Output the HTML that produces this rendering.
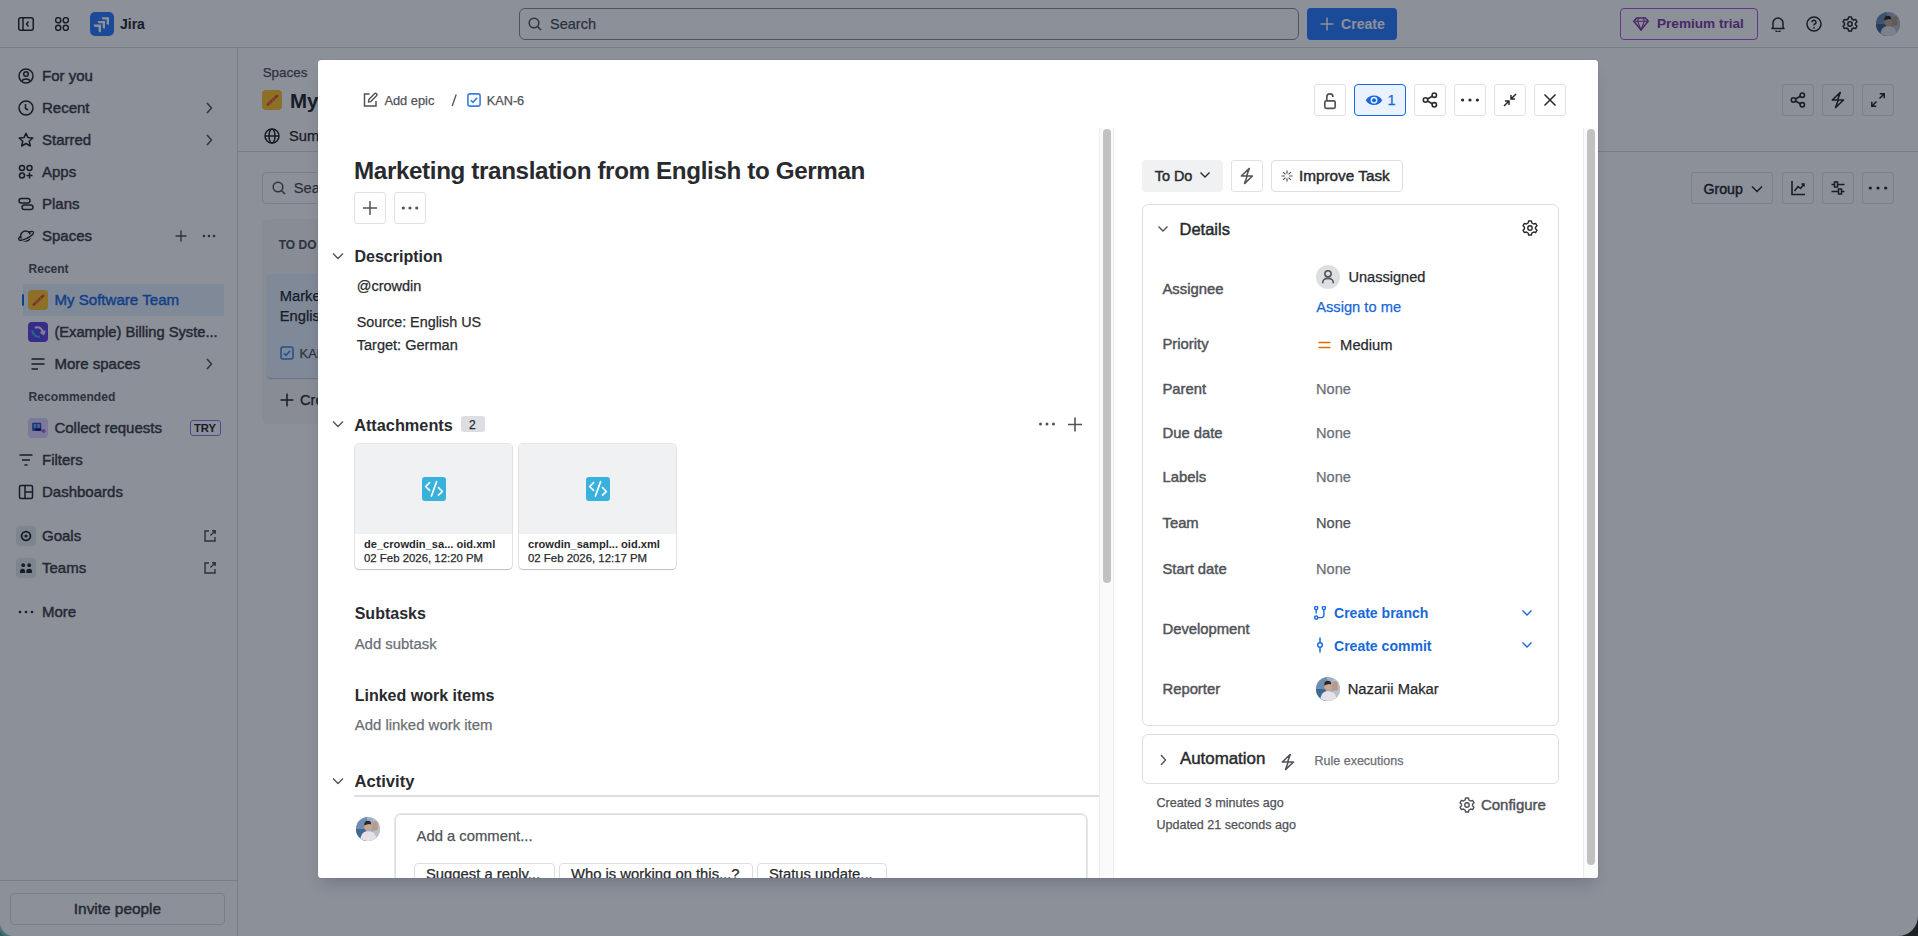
<!DOCTYPE html><html><head><meta charset="utf-8"><style>
*{margin:0;padding:0}
html,body{width:1918px;height:936px;overflow:hidden;background:#fff}
body{font-family:"Liberation Sans",sans-serif;position:relative}
.t{position:absolute;line-height:1;white-space:nowrap;-webkit-text-stroke:0.25px currentColor}
.t.b{-webkit-text-stroke:0}
.t.m{-webkit-text-stroke:0.45px currentColor}
.r{position:absolute;display:block}
#page{position:absolute;left:0;top:0;width:1918px;height:936px;overflow:hidden}
#blanket{position:absolute;left:0;top:0;width:1918px;height:936px;background:rgba(5,12,31,0.46)}
#modal{position:absolute;left:318px;top:60px;width:1280px;height:818px;background:#fff;border-radius:3px;box-shadow:0 10px 14px -4px rgba(9,30,66,.18),0 0 1px rgba(9,30,66,.31)}
#mc{position:absolute;left:0;top:0;width:1918px;height:936px;overflow:hidden;clip-path:inset(60px 320px 58px 318px round 3px)}
</style></head><body><div id="page">
<div class="r" style="left:0px;top:47px;width:1918px;height:1px;background:#DDDEE1"></div>
<svg class="r" style="left:18px;top:17px;" width="16" height="14" viewBox="0 0 16 14" fill="none"><rect x="0.75" y="0.75" width="14.5" height="12.5" rx="2" stroke="#292A2E" stroke-width="1.5"/><line x1="5" y1="1" x2="5" y2="13" stroke="#292A2E" stroke-width="1.5"/><path d="M10.5 4.5 L8.5 7 L10.5 9.5" stroke="#292A2E" stroke-width="1.5"/></svg>
<svg class="r" style="left:55px;top:17px;" width="14" height="14" viewBox="0 0 14 14" fill="none"><circle cx="3.2" cy="3.2" r="2.6" stroke="#292A2E" stroke-width="1.5"/><circle cx="3.2" cy="10.8" r="2.6" stroke="#292A2E" stroke-width="1.5"/><circle cx="10.8" cy="3.2" r="2.6" stroke="#292A2E" stroke-width="1.5"/><circle cx="10.8" cy="10.8" r="2.6" stroke="#292A2E" stroke-width="1.5"/></svg>
<div class="r" style="left:90px;top:12px;width:24px;height:24px;background:#2F80FF;border-radius:5px"></div>
<svg class="r" style="left:90px;top:12px;" width="24" height="24" viewBox="0 0 24 24" fill="none"><path d="M11.5 5.2 L19 5.2 L19 13.0 L16.6 12.0 L16.6 7.6 L12.6 7.6 Z" fill="#fff"/><path d="M7.5 8.9 L15 8.9 L15 16.7 L12.600000000000001 15.7 L12.600000000000001 11.3 L8.6 11.3 Z" fill="#fff"/><path d="M3.5 12.600000000000001 L11 12.600000000000001 L11 20.4 L8.600000000000001 19.4 L8.600000000000001 15.0 L4.6 15.0 Z" fill="#fff"/></svg>
<div class="t b" style="left:120px;top:17.45px;font-size:14px;font-weight:700;color:#292A2E;">Jira</div>
<div class="r" style="left:519px;top:8px;width:780px;height:32px;border:1px solid #8C8F97;border-radius:6px;box-sizing:border-box"></div>
<svg class="r" style="left:528px;top:17px;" width="14" height="14" viewBox="0 0 14 14" fill="none"><circle cx="6" cy="6" r="4.8" stroke="#505258" stroke-width="1.5"/><line x1="9.5" y1="9.5" x2="13" y2="13" stroke="#505258" stroke-width="1.5"/></svg>
<div class="t" style="left:550px;top:17.33px;font-size:14.5px;font-weight:400;color:#505258;">Search</div>
<div class="r" style="left:1307px;top:8px;width:90px;height:32px;background:#2F80FF;border-radius:4px"></div>
<svg class="r" style="left:1320px;top:17px;" width="14" height="14" viewBox="0 0 14 14" fill="none"><path d="M7 0.5 V13.5 M0.5 7 H13.5" stroke="#fff" stroke-width="1.5"/></svg>
<div class="t b" style="left:1341px;top:16.86px;font-size:14.1px;font-weight:700;color:#FFFFFF;">Create</div>
<div class="r" style="left:1620px;top:8px;width:138px;height:32px;border:1px solid #AF59E1;border-radius:4px;box-sizing:border-box"></div>
<svg class="r" style="left:1633px;top:17px;" width="16" height="14" viewBox="0 0 16 14" fill="none"><path d="M3.6 0.9 H12.4 L15.2 4.3 L8 13 L0.8 4.3 Z" stroke="#803FA5" stroke-width="1.5" stroke-linejoin="round"/><path d="M0.8 4.3 H15.2 M5.6 0.9 L4.6 4.3 L8 13 L11.4 4.3 L10.4 0.9" stroke="#803FA5" stroke-width="1.1"/></svg>
<div class="t b" style="left:1657px;top:17.09px;font-size:13.6px;font-weight:700;color:#803FA5;">Premium trial</div>
<svg class="r" style="left:1770px;top:16px;" width="16" height="16" viewBox="0 0 16 16" fill="none"><path d="M3 11.5 V7 a5 5 0 0 1 10 0 V11.5 L14 12.5 H2 Z" stroke="#292A2E" stroke-width="1.5" stroke-linejoin="round"/><path d="M6 14.5 a2 1.6 0 0 0 4 0" stroke="#292A2E" stroke-width="1.5"/></svg>
<svg class="r" style="left:1806px;top:16px;" width="16" height="16" viewBox="0 0 16 16" fill="none"><circle cx="8" cy="8" r="7" stroke="#292A2E" stroke-width="1.5"/><path d="M6 6.2 a2 2 0 1 1 2.8 1.8 c-.6.3-.8.7-.8 1.4" stroke="#292A2E" stroke-width="1.5"/><circle cx="8" cy="11.8" r="0.9" fill="#292A2E"/></svg>
<svg class="r" style="left:1842px;top:16px;" width="16" height="16" viewBox="0 0 16 16" fill="none"><path d="M6.6 1 H9.4 L9.9 3 L11.6 4 L13.6 3.4 L15 5.8 L13.5 7.2 V8.8 L15 10.2 L13.6 12.6 L11.6 12 L9.9 13 L9.4 15 H6.6 L6.1 13 L4.4 12 L2.4 12.6 L1 10.2 L2.5 8.8 V7.2 L1 5.8 L2.4 3.4 L4.4 4 L6.1 3 Z" stroke="#292A2E" stroke-width="1.5" stroke-linejoin="round"/><circle cx="8" cy="8" r="2.2" stroke="#292A2E" stroke-width="1.5"/></svg>
<div class="r" style="left:1876px;top:12px;width:24px;height:24px;border-radius:50%;overflow:hidden"><svg width="24" height="24" viewBox="0 0 24 24" style="position:absolute;left:0;top:0"><rect width="24" height="24" fill="#9fb0c4"/><rect x="0" y="0" width="11" height="24" fill="#6f8fb2"/><rect x="0" y="12" width="10" height="12" fill="#3f6a8f"/><rect x="17" y="0" width="7" height="24" fill="#b9bfcb"/><path d="M15.5 14 L17 5 Q19 3 21.5 5.5 L22 13 Z" fill="#b89a86"/><ellipse cx="11.8" cy="9.6" rx="3.6" ry="4.6" fill="#c9a690"/><path d="M8.2 8.5 Q8 3.6 12 3.8 Q15.6 3.8 15.2 7.6 Q13 6 8.2 8.5 Z" fill="#2b2826"/><path d="M4 24 Q5 15 10 14.2 L13.5 14.2 Q20 14.5 21 24 Z" fill="#e6e1e8"/></svg></div>
<div class="r" style="left:237px;top:48px;width:1px;height:888px;background:#DDDEE1"></div>
<svg class="r" style="left:18px;top:68px;" width="16" height="16" viewBox="0 0 16 16" fill="none"><circle cx="8" cy="8" r="7" stroke="#292A2E" stroke-width="1.5"/><circle cx="8" cy="6" r="2.3" stroke="#292A2E" stroke-width="1.5"/><path d="M3.8 12.8 a4.5 3 0 0 1 8.4 0" stroke="#292A2E" stroke-width="1.5"/></svg>
<div class="t m" style="left:42px;top:68.10px;font-size:15px;font-weight:400;color:#3F4147;">For you</div>
<svg class="r" style="left:18px;top:100px;" width="16" height="16" viewBox="0 0 16 16" fill="none"><circle cx="8" cy="8" r="7" stroke="#292A2E" stroke-width="1.5"/><path d="M7.5 4 V8.5 L10 10" stroke="#292A2E" stroke-width="1.5"/></svg>
<div class="t m" style="left:42px;top:100.10px;font-size:15px;font-weight:400;color:#3F4147;">Recent</div>
<svg class="r" style="left:205px;top:102px;" width="8" height="12" viewBox="0 0 8 12" fill="none"><path d="M2 1 L6.5 6 L2 11" stroke="#505258" stroke-width="1.5"/></svg>
<svg class="r" style="left:18px;top:132px;" width="16" height="16" viewBox="0 0 16 16" fill="none"><path d="M8 1.2 L10 5.6 L14.8 6 L11.2 9.2 L12.3 14 L8 11.5 L3.7 14 L4.8 9.2 L1.2 6 L6 5.6 Z" stroke="#292A2E" stroke-width="1.5" stroke-linejoin="round"/></svg>
<div class="t m" style="left:42px;top:132.10px;font-size:15px;font-weight:400;color:#3F4147;">Starred</div>
<svg class="r" style="left:205px;top:134px;" width="8" height="12" viewBox="0 0 8 12" fill="none"><path d="M2 1 L6.5 6 L2 11" stroke="#505258" stroke-width="1.5"/></svg>
<svg class="r" style="left:18px;top:164px;" width="16" height="16" viewBox="0 0 16 16" fill="none"><circle cx="4" cy="4" r="2.5" stroke="#292A2E" stroke-width="1.5"/><circle cx="11.5" cy="4" r="2.5" stroke="#292A2E" stroke-width="1.5"/><circle cx="4" cy="11.5" r="2.5" stroke="#292A2E" stroke-width="1.5"/><path d="M11.5 8.5 V14.5 M8.5 11.5 H14.5" stroke="#292A2E" stroke-width="1.5"/></svg>
<div class="t m" style="left:42px;top:164.10px;font-size:15px;font-weight:400;color:#3F4147;">Apps</div>
<svg class="r" style="left:18px;top:196px;" width="16" height="16" viewBox="0 0 16 16" fill="none"><rect x="1" y="2.5" width="11" height="4.5" rx="2.25" stroke="#292A2E" stroke-width="1.5"/><rect x="4" y="9" width="11" height="4.5" rx="2.25" stroke="#292A2E" stroke-width="1.5"/></svg>
<div class="t m" style="left:42px;top:196.10px;font-size:15px;font-weight:400;color:#3F4147;">Plans</div>
<svg class="r" style="left:18px;top:228px;" width="16" height="16" viewBox="0 0 16 16" fill="none"><ellipse cx="8.1" cy="7.9" rx="8.2" ry="2.5" transform="rotate(-27 8.1 7.9)" stroke="#292A2E" stroke-width="1.5"/><circle cx="7.6" cy="8.1" r="5" fill="#fff" stroke="#292A2E" stroke-width="1.5"/><path d="M15.41 4.18 L15.49 4.57 L15.40 5.05 L15.13 5.59 L14.68 6.20 L14.07 6.84 L13.31 7.51 L12.43 8.19 L11.44 8.87 L10.36 9.52 L9.23 10.13 L8.08 10.68 L6.92 11.17 L5.79 11.57 L4.72 11.89 L3.74 12.11 L2.86 12.22 L2.11 12.23 L1.50 12.13 L1.06 11.93 L0.79 11.62" stroke="#fff" stroke-width="3.2"/><path d="M15.41 4.18 L15.49 4.57 L15.40 5.05 L15.13 5.59 L14.68 6.20 L14.07 6.84 L13.31 7.51 L12.43 8.19 L11.44 8.87 L10.36 9.52 L9.23 10.13 L8.08 10.68 L6.92 11.17 L5.79 11.57 L4.72 11.89 L3.74 12.11 L2.86 12.22 L2.11 12.23 L1.50 12.13 L1.06 11.93 L0.79 11.62" stroke="#292A2E" stroke-width="1.5"/></svg>
<div class="t m" style="left:42px;top:228.10px;font-size:15px;font-weight:400;color:#3F4147;">Spaces</div>
<svg class="r" style="left:175px;top:230px;" width="12" height="12" viewBox="0 0 12 12" fill="none"><path d="M6 0.5 V11.5 M0.5 6 H11.5" stroke="#505258" stroke-width="1.4"/></svg>
<svg class="r" style="left:202px;top:234px;" width="14" height="4" viewBox="0 0 14 4" fill="none"><circle cx="2" cy="2" r="1.3" fill="#505258"/><circle cx="7" cy="2" r="1.3" fill="#505258"/><circle cx="12" cy="2" r="1.3" fill="#505258"/></svg>
<div class="t b" style="left:28.6px;top:262.84px;font-size:12px;font-weight:700;color:#505258;">Recent</div>
<div class="r" style="left:23px;top:284px;width:201px;height:32px;background:#E9F2FE;border-radius:1px"></div>
<div class="r" style="left:22px;top:294px;width:2.2px;height:12px;background:#1C6CE0;border-radius:1px"></div>
<div class="r" style="left:28px;top:290px;width:20px;height:20px;background:#FFC530;border-radius:4px;overflow:hidden"></div>
<svg class="r" style="left:28px;top:290px;" width="20" height="20" viewBox="0 0 20 20" fill="none"><path d="M5.8 14.6 L15.2 5.8" stroke="#E2502A" stroke-width="2.6" stroke-linecap="round"/><path d="M7.5 13 L13.5 7.4" stroke="#FFC2A0" stroke-width="1" stroke-dasharray="1.6 1.4"/></svg>
<div class="t m" style="left:54.4px;top:292.42px;font-size:15.1px;font-weight:400;color:#1C6CE0;">My Software Team</div>
<div class="r" style="left:28px;top:322px;width:20px;height:20px;background:#6446E6;border-radius:4px"></div>
<svg class="r" style="left:28px;top:322px;" width="20" height="20" viewBox="0 0 20 20" fill="none"><path d="M6.8 5.8 Q12.6 3.6 15.2 10.4" stroke="#E8ECF8" stroke-width="2"/><path d="M12.6 10 L15.6 12.2 L16.9 8.6" stroke="#E8ECF8" stroke-width="1.8" stroke-linejoin="round"/><path d="M4.3 8.4 Q5.4 15 12 15" stroke="#2FB7E8" stroke-width="2.2"/></svg>
<div class="t m" style="left:54.4px;top:324.76px;font-size:14.7px;font-weight:400;color:#3F4147;">(Example) Billing Syste...</div>
<svg class="r" style="left:31px;top:358px;" width="14" height="12" viewBox="0 0 14 12" fill="none"><path d="M0.5 1 H13.5 M0.5 6 H13.5 M0.5 11 H7" stroke="#292A2E" stroke-width="1.5"/></svg>
<div class="t m" style="left:54.4px;top:356.40px;font-size:15px;font-weight:400;color:#3F4147;">More spaces</div>
<svg class="r" style="left:205px;top:358px;" width="8" height="12" viewBox="0 0 8 12" fill="none"><path d="M2 1 L6.5 6 L2 11" stroke="#505258" stroke-width="1.5"/></svg>
<div class="t b" style="left:28.6px;top:390.56px;font-size:12.1px;font-weight:700;color:#505258;">Recommended</div>
<div class="r" style="left:28px;top:418px;width:20px;height:20px;background:#E3D4FF;border-radius:4px"></div>
<svg class="r" style="left:28px;top:418px;" width="20" height="20" viewBox="0 0 20 20" fill="none"><rect x="4.2" y="4.7" width="9" height="8.2" rx="0.8" fill="#2456C8"/><rect x="5.8" y="6" width="2.4" height="4" fill="#8FA8E8"/><rect x="9.2" y="6" width="2.6" height="4" fill="#8FA8E8"/><rect x="7.5" y="10.4" width="5.7" height="2.5" fill="#0B1E7A"/><path d="M15.5 11 V15 M13.5 13 H17.5" stroke="#B14FE0" stroke-width="1.6"/></svg>
<div class="t m" style="left:54.4px;top:420.20px;font-size:15px;font-weight:400;color:#3F4147;">Collect requests</div>
<div class="r" style="left:190px;top:420px;width:31px;height:16px;border:1px solid #8F7EE7;border-radius:3px;box-sizing:border-box"></div>
<div class="t b" style="left:194px;top:423.32px;font-size:11.2px;font-weight:700;color:#292A2E;">TRY</div>
<svg class="r" style="left:18px;top:452px;" width="16" height="16" viewBox="0 0 16 16" fill="none"><path d="M1.5 3 H14.5 M4 8 H12 M6.5 13 H9.5" stroke="#292A2E" stroke-width="1.5"/></svg>
<div class="t m" style="left:42px;top:452.10px;font-size:15px;font-weight:400;color:#3F4147;">Filters</div>
<svg class="r" style="left:18px;top:484px;" width="16" height="16" viewBox="0 0 16 16" fill="none"><rect x="1.5" y="1.5" width="13" height="13" rx="1.5" stroke="#292A2E" stroke-width="1.5"/><path d="M7 1.5 V14.5 M7 8 H14.5" stroke="#292A2E" stroke-width="1.5"/></svg>
<div class="t m" style="left:42px;top:484.10px;font-size:15px;font-weight:400;color:#3F4147;">Dashboards</div>
<div class="r" style="left:16px;top:526px;width:20px;height:20px;background:#E8EAED;border-radius:4px"></div>
<svg class="r" style="left:18px;top:528px;" width="16" height="16" viewBox="0 0 16 16" fill="none"><circle cx="8" cy="8" r="4.4" stroke="#292A2E" stroke-width="1.9"/><circle cx="8" cy="8" r="1.6" fill="#292A2E"/></svg>
<div class="t m" style="left:42px;top:528.10px;font-size:15px;font-weight:400;color:#3F4147;">Goals</div>
<svg class="r" style="left:203px;top:529px;" width="14" height="14" viewBox="0 0 14 14" fill="none"><path d="M6 2 H2 V12 H12 V8" stroke="#505258" stroke-width="1.4"/><path d="M7.5 6.5 L12 2 M9 1.8 H12.2 V5" stroke="#505258" stroke-width="1.4"/></svg>
<div class="r" style="left:16px;top:558px;width:20px;height:20px;background:#E8EAED;border-radius:4px"></div>
<svg class="r" style="left:18px;top:560px;" width="16" height="16" viewBox="0 0 16 16" fill="none"><circle cx="5.2" cy="5.2" r="1.9" fill="#292A2E"/><circle cx="11.2" cy="5.2" r="1.9" fill="#292A2E"/><path d="M2 13 V11 Q2 8.8 4.6 8.8 Q7.1 8.8 7.1 11 V13 Z M8.4 13 V11 Q8.4 8.8 11.1 8.8 Q13.9 8.8 13.9 11 V13 Z" fill="#292A2E"/></svg>
<div class="t m" style="left:42px;top:560.10px;font-size:15px;font-weight:400;color:#3F4147;">Teams</div>
<svg class="r" style="left:203px;top:561px;" width="14" height="14" viewBox="0 0 14 14" fill="none"><path d="M6 2 H2 V12 H12 V8" stroke="#505258" stroke-width="1.4"/><path d="M7.5 6.5 L12 2 M9 1.8 H12.2 V5" stroke="#505258" stroke-width="1.4"/></svg>
<svg class="r" style="left:18px;top:610px;" width="16" height="4" viewBox="0 0 16 4" fill="none"><circle cx="2" cy="2" r="1.3" fill="#292A2E"/><circle cx="8" cy="2" r="1.3" fill="#292A2E"/><circle cx="14" cy="2" r="1.3" fill="#292A2E"/></svg>
<div class="t m" style="left:42px;top:604.10px;font-size:15px;font-weight:400;color:#3F4147;">More</div>
<div class="r" style="left:0px;top:880px;width:237px;height:1px;background:#DDDEE1"></div>
<div class="r" style="left:10px;top:893px;width:215px;height:32px;border:1px solid #DDDEE1;border-radius:4px;box-sizing:border-box"></div>
<div class="t m" style="left:73.8px;top:901.36px;font-size:15.4px;font-weight:400;color:#3F4147;">Invite people</div>
<div class="t" style="left:262.7px;top:66.06px;font-size:13.4px;font-weight:400;color:#505258;">Spaces</div>
<div class="r" style="left:262px;top:90px;width:20px;height:20px;background:#FFC530;border-radius:4px;overflow:hidden"></div>
<svg class="r" style="left:262px;top:90px;" width="20" height="20" viewBox="0 0 20 20" fill="none"><path d="M5.8 14.6 L15.2 5.8" stroke="#E2502A" stroke-width="2.6" stroke-linecap="round"/><path d="M7.5 13 L13.5 7.4" stroke="#FFC2A0" stroke-width="1" stroke-dasharray="1.6 1.4"/></svg>
<div class="t b" style="left:290px;top:91.35px;font-size:20.5px;font-weight:700;color:#292A2E;">My Software Team</div>
<svg class="r" style="left:264px;top:128px;" width="16" height="16" viewBox="0 0 16 16" fill="none"><circle cx="8" cy="8" r="7" stroke="#292A2E" stroke-width="1.5"/><ellipse cx="8" cy="8" rx="3" ry="7" stroke="#292A2E" stroke-width="1.5"/><path d="M1 8 H15" stroke="#292A2E" stroke-width="1.5"/></svg>
<div class="t" style="left:289px;top:128.56px;font-size:14.7px;font-weight:400;color:#292A2E;">Summary</div>
<div class="r" style="left:238px;top:151px;width:1680px;height:1px;background:#DDDEE1"></div>
<div class="r" style="left:262px;top:172px;width:200px;height:32px;border:1px solid #DDDEE1;border-radius:4px;box-sizing:border-box"></div>
<svg class="r" style="left:272px;top:181px;" width="14" height="14" viewBox="0 0 14 14" fill="none"><circle cx="6" cy="6" r="4.8" stroke="#505258" stroke-width="1.5"/><line x1="9.5" y1="9.5" x2="13" y2="13" stroke="#505258" stroke-width="1.5"/></svg>
<div class="t" style="left:293.7px;top:181.16px;font-size:14.7px;font-weight:400;color:#505258;">Search board</div>
<div class="r" style="left:262px;top:219px;width:272px;height:205px;background:#F7F8F9;border-radius:6px"></div>
<div class="t b" style="left:278.7px;top:239.14px;font-size:12px;font-weight:700;color:#505258;">TO DO</div>
<div class="r" style="left:267px;top:274px;width:260px;height:104px;background:#E9F2FE;border-radius:4px;box-shadow:0 1px 1px rgba(9,30,66,.25)"></div>
<div class="t" style="left:279.8px;top:289.16px;font-size:14.7px;font-weight:400;color:#292A2E;">Marketing translation from</div>
<div class="t" style="left:279.8px;top:309.16px;font-size:14.7px;font-weight:400;color:#292A2E;">English to German</div>
<svg class="r" style="left:280px;top:346px;" width="14" height="14" viewBox="0 0 14 14" fill="none"><rect x="1" y="1" width="12" height="12" rx="2" stroke="#4688EC" stroke-width="1.6"/><path d="M3.8 7.2 L6 9.4 L10.2 4.8" stroke="#4688EC" stroke-width="1.6"/></svg>
<div class="t" style="left:299.5px;top:346.60px;font-size:13px;font-weight:400;color:#505258;">KAN-6</div>
<svg class="r" style="left:280px;top:393px;" width="14" height="14" viewBox="0 0 14 14" fill="none"><path d="M7 0.5 V13.5 M0.5 7 H13.5" stroke="#292A2E" stroke-width="1.5"/></svg>
<div class="t" style="left:300px;top:392.66px;font-size:14.7px;font-weight:400;color:#292A2E;">Create</div>
<div class="r" style="left:1782px;top:84px;width:32px;height:32px;border:1px solid #E0E1E3;background:transparent;border-radius:3px;box-sizing:border-box"></div>
<svg class="r" style="left:1782px;top:84px;" width="32" height="32" viewBox="0 0 32 32" fill="none"><circle cx="20.3" cy="11.2" r="2.2" stroke="#292A2E" stroke-width="1.6"/><circle cx="11.5" cy="16" r="2.2" stroke="#292A2E" stroke-width="1.6"/><circle cx="20.3" cy="20.8" r="2.2" stroke="#292A2E" stroke-width="1.6"/><path d="M13.5 15 L18.3 12.3 M13.5 17 L18.3 19.7" stroke="#292A2E" stroke-width="1.6"/></svg>
<div class="r" style="left:1822px;top:84px;width:32px;height:32px;border:1px solid #E0E1E3;background:transparent;border-radius:3px;box-sizing:border-box"></div>
<svg class="r" style="left:1822px;top:84px;" width="32" height="32" viewBox="0 0 32 32" fill="none"><path d="M18.3 8.4 L10.3 16 H16.2 L13.5 23.6 L21.5 16 H15.6 Z" stroke="#292A2E" stroke-width="1.5" stroke-linejoin="round"/></svg>
<div class="r" style="left:1862px;top:84px;width:32px;height:32px;border:1px solid #E0E1E3;background:transparent;border-radius:3px;box-sizing:border-box"></div>
<svg class="r" style="left:1862px;top:84px;" width="32" height="32" viewBox="0 0 32 32" fill="none"><path d="M17.5 14.5 L22 10 M17.8 9.8 H22.2 V14.2 M14.5 17.5 L10 22 M9.8 17.8 V22.2 H14.2" stroke="#292A2E" stroke-width="1.5"/></svg>
<div class="r" style="left:1691px;top:172px;width:82px;height:32px;border:1px solid #E0E1E3;background:transparent;border-radius:3px;box-sizing:border-box"></div>
<svg class="r" style="left:1691px;top:172px;" width="82" height="32" viewBox="0 0 82 32" fill="none"><path d="M61 14.5 L66 19.5 L71 14.5" stroke="#292A2E" stroke-width="1.5"/></svg>
<div class="t m" style="left:1703.4px;top:182.08px;font-size:14.2px;font-weight:400;color:#292A2E;">Group</div>
<div class="r" style="left:1782px;top:172px;width:32px;height:32px;border:1px solid #E0E1E3;background:transparent;border-radius:3px;box-sizing:border-box"></div>
<svg class="r" style="left:1782px;top:172px;" width="32" height="32" viewBox="0 0 32 32" fill="none"><path d="M10 9 V22.5 H23" stroke="#292A2E" stroke-width="1.6"/><path d="M12.5 19 L16 14.5 L18.5 16.5 L22 12 M19.5 12 H22 V14.5" stroke="#292A2E" stroke-width="1.5"/></svg>
<div class="r" style="left:1822px;top:172px;width:32px;height:32px;border:1px solid #E0E1E3;background:transparent;border-radius:3px;box-sizing:border-box"></div>
<svg class="r" style="left:1822px;top:172px;" width="32" height="32" viewBox="0 0 32 32" fill="none"><path d="M9.5 12.5 H22.5 M9.5 19.5 H22.5" stroke="#292A2E" stroke-width="1.6"/><rect x="12.5" y="10" width="3" height="5" fill="#fff" stroke="#292A2E" stroke-width="1.5"/><rect x="16.5" y="17" width="3" height="5" fill="#fff" stroke="#292A2E" stroke-width="1.5"/></svg>
<div class="r" style="left:1862px;top:172px;width:32px;height:32px;border:1px solid #E0E1E3;background:transparent;border-radius:3px;box-sizing:border-box"></div>
<svg class="r" style="left:1862px;top:172px;" width="32" height="32" viewBox="0 0 32 32" fill="none"><circle cx="8.3" cy="16" r="1.6" fill="#292A2E"/><circle cx="16" cy="16" r="1.6" fill="#292A2E"/><circle cx="23.7" cy="16" r="1.6" fill="#292A2E"/></svg>
</div>
<div id="blanket"></div>
<svg class="r" style="left:1898px;top:916px;" width="20" height="20" viewBox="0 0 20 20" fill="none"><path d="M20 0 A20 20 0 0 1 0 20 L20 20 Z" fill="#1b2226"/></svg>
<svg class="r" style="left:0px;top:922px;" width="14" height="14" viewBox="0 0 14 14" fill="none"><defs><linearGradient id="tg" x1="0" y1="1" x2="1" y2="0"><stop offset="0" stop-color="#2d5558"/><stop offset="0.6" stop-color="#6f9aa0"/></linearGradient></defs><path d="M0 0 A14 14 0 0 0 14 14 L0 14 Z" fill="url(#tg)"/></svg>
<div id="modal">
</div>
<div id="mc">
<svg class="r" style="left:362px;top:92px;" width="16" height="16" viewBox="0 0 16 16" fill="none"><path d="M7.5 2 H2.5 V14 H14 V9" stroke="#505258" stroke-width="1.5"/><path d="M6.5 10 L6.8 7.5 L12.5 1.8 a1.2 1.2 0 0 1 2 2 L8.8 9.6 Z" stroke="#505258" stroke-width="1.4" stroke-linejoin="round"/></svg>
<div class="t" style="left:384.4px;top:94.72px;font-size:12.85px;font-weight:400;color:#505258;">Add epic</div>
<svg class="r" style="left:450px;top:93px;" width="8" height="15" viewBox="0 0 8 15" fill="none"><path d="M6.2 1.5 L2.2 13" stroke="#505258" stroke-width="1.3"/></svg>
<svg class="r" style="left:467px;top:93px;" width="14" height="14" viewBox="0 0 14 14" fill="none"><rect x="0.9" y="0.9" width="12.2" height="12.2" rx="2" stroke="#357DE8" stroke-width="1.6"/><path d="M3.8 7.2 L6 9.4 L10.2 4.8" stroke="#357DE8" stroke-width="1.6"/></svg>
<div class="t" style="left:486.8px;top:94.85px;font-size:12.7px;font-weight:400;color:#505258;">KAN-6</div>
<div class="r" style="left:1314px;top:84px;width:32px;height:32px;border:1px solid #E0E1E3;background:transparent;border-radius:3px;box-sizing:border-box"></div>
<svg class="r" style="left:1314px;top:84px;" width="32" height="32" viewBox="0 0 32 32" fill="none"><rect x="10.8" y="16.8" width="10.4" height="7.6" rx="1.6" stroke="#505258" stroke-width="1.7"/><path d="M12.8 16.8 V13 a3.1 3.1 0 0 1 6.2 0" stroke="#505258" stroke-width="1.7"/></svg>
<div class="r" style="left:1354px;top:84px;width:52px;height:32px;border:1px solid #1868DB;background:#E9F2FE;border-radius:4px;box-sizing:border-box"></div>
<svg class="r" style="left:1365px;top:92px;" width="18" height="16" viewBox="0 0 18 16" fill="none"><path d="M0.8 8.2 C3.5 1.8 14.5 1.8 17.2 8.2 C14.5 14.6 3.5 14.6 0.8 8.2 Z" fill="#1868DB"/><circle cx="9" cy="8.2" r="3.4" fill="#E9F2FE"/><circle cx="9" cy="8.2" r="2" fill="#1868DB"/></svg>
<div class="t" style="left:1387.5px;top:93.33px;font-size:14.5px;font-weight:400;color:#1868DB;">1</div>
<div class="r" style="left:1414px;top:84px;width:32px;height:32px;border:1px solid #E0E1E3;background:transparent;border-radius:3px;box-sizing:border-box"></div>
<svg class="r" style="left:1414px;top:84px;" width="32" height="32" viewBox="0 0 32 32" fill="none"><circle cx="20.3" cy="11.2" r="2.2" stroke="#292A2E" stroke-width="1.6"/><circle cx="11.5" cy="16" r="2.2" stroke="#292A2E" stroke-width="1.6"/><circle cx="20.3" cy="20.8" r="2.2" stroke="#292A2E" stroke-width="1.6"/><path d="M13.5 15 L18.3 12.3 M13.5 17 L18.3 19.7" stroke="#292A2E" stroke-width="1.6"/></svg>
<div class="r" style="left:1454px;top:84px;width:32px;height:32px;border:1px solid #E0E1E3;background:transparent;border-radius:3px;box-sizing:border-box"></div>
<svg class="r" style="left:1454px;top:84px;" width="32" height="32" viewBox="0 0 32 32" fill="none"><circle cx="8.6" cy="16" r="1.6" fill="#292A2E"/><circle cx="16" cy="16" r="1.6" fill="#292A2E"/><circle cx="23.4" cy="16" r="1.6" fill="#292A2E"/></svg>
<div class="r" style="left:1494px;top:84px;width:32px;height:32px;border:1px solid #E0E1E3;background:transparent;border-radius:3px;box-sizing:border-box"></div>
<svg class="r" style="left:1494px;top:84px;" width="32" height="32" viewBox="0 0 32 32" fill="none"><path d="M10 22 L15 17 M11 17 H15 V21 M22 10 L17 15 M17 11 V15 H21" stroke="#292A2E" stroke-width="1.5"/></svg>
<div class="r" style="left:1534px;top:84px;width:32px;height:32px;border:1px solid #E0E1E3;background:transparent;border-radius:3px;box-sizing:border-box"></div>
<svg class="r" style="left:1534px;top:84px;" width="32" height="32" viewBox="0 0 32 32" fill="none"><path d="M10.5 10.5 L21.5 21.5 M21.5 10.5 L10.5 21.5" stroke="#292A2E" stroke-width="1.5"/></svg>
<div class="t b" style="left:354px;top:159.11px;font-size:24.2px;font-weight:700;color:#292A2E;letter-spacing:-0.36px">Marketing translation from English to German</div>
<div class="r" style="left:354px;top:192px;width:32px;height:32px;border:1px solid #E0E1E3;background:transparent;border-radius:3px;box-sizing:border-box"></div>
<svg class="r" style="left:354px;top:192px;" width="32" height="32" viewBox="0 0 32 32" fill="none"><path d="M16 9 V23 M9 16 H23" stroke="#505258" stroke-width="1.5"/></svg>
<div class="r" style="left:394px;top:192px;width:32px;height:32px;border:1px solid #E0E1E3;background:transparent;border-radius:3px;box-sizing:border-box"></div>
<svg class="r" style="left:394px;top:192px;" width="32" height="32" viewBox="0 0 32 32" fill="none"><circle cx="9.3" cy="16" r="1.6" fill="#505258"/><circle cx="16" cy="16" r="1.6" fill="#505258"/><circle cx="22.7" cy="16" r="1.6" fill="#505258"/></svg>
<svg class="r" style="left:332px;top:252px;" width="12" height="8" viewBox="0 0 12 8" fill="none"><path d="M1 1.5 L6 6.5 L11 1.5" stroke="#505258" stroke-width="1.4"/></svg>
<div class="t b" style="left:354.5px;top:249.36px;font-size:16px;font-weight:700;color:#292A2E;">Description</div>
<div class="t" style="left:356.7px;top:279.43px;font-size:14.5px;font-weight:400;color:#292A2E;">@crowdin</div>
<div class="t" style="left:356.7px;top:314.85px;font-size:14.35px;font-weight:400;color:#292A2E;">Source: English US</div>
<div class="t" style="left:356.7px;top:338.38px;font-size:14.55px;font-weight:400;color:#292A2E;">Target: German</div>
<svg class="r" style="left:332px;top:420px;" width="12" height="8" viewBox="0 0 12 8" fill="none"><path d="M1 1.5 L6 6.5 L11 1.5" stroke="#505258" stroke-width="1.4"/></svg>
<div class="t b" style="left:354.2px;top:416.70px;font-size:16.3px;font-weight:700;color:#292A2E;">Attachments</div>
<div class="r" style="left:461px;top:416px;width:24px;height:16px;background:#DDDEE1;border-radius:3px"></div>
<div class="t" style="left:469px;top:419.44px;font-size:12px;font-weight:400;color:#292A2E;">2</div>
<svg class="r" style="left:1038px;top:422px;" width="18" height="4" viewBox="0 0 18 4" fill="none"><circle cx="2.5" cy="2" r="1.5" fill="#505258"/><circle cx="9" cy="2" r="1.5" fill="#505258"/><circle cx="15.5" cy="2" r="1.5" fill="#505258"/></svg>
<svg class="r" style="left:1067px;top:417px;" width="16" height="16" viewBox="0 0 16 16" fill="none"><path d="M8 0.5 V14.5 M1 7.5 H15" stroke="#505258" stroke-width="1.6"/></svg>
<div class="r" style="left:355px;top:444px;width:157px;height:125px;border-radius:4px;background:#fff;box-shadow:0 0 0 1px rgba(11,18,14,.10),0 1px 1px rgba(30,31,33,.2);overflow:hidden"><div style="position:absolute;left:0;top:0;width:157px;height:90px;background:#F0F1F2"></div></div>
<div class="r" style="left:422px;top:477px;width:24px;height:24px;background:#38B1DC;border-radius:3px"></div>
<svg class="r" style="left:422px;top:477px;" width="24" height="24" viewBox="0 0 24 24" fill="none"><path d="M7.6 5.6 L3.6 9.5 L7.6 13.3 M14.6 4.6 L9.4 19 M16.5 10.7 L20.4 14.5 L16.5 18.2" stroke="#fff" stroke-width="1.7" stroke-linecap="round" stroke-linejoin="round"/></svg>
<div class="t b" style="left:364px;top:539.20px;font-size:11.1px;font-weight:700;color:#292A2E;">de_crowdin_sa... oid.xml</div>
<div class="t" style="left:364px;top:552.65px;font-size:11.4px;font-weight:400;color:#292A2E;">02 Feb 2026, 12:20 PM</div>
<div class="r" style="left:519px;top:444px;width:157px;height:125px;border-radius:4px;background:#fff;box-shadow:0 0 0 1px rgba(11,18,14,.10),0 1px 1px rgba(30,31,33,.2);overflow:hidden"><div style="position:absolute;left:0;top:0;width:157px;height:90px;background:#F0F1F2"></div></div>
<div class="r" style="left:586px;top:477px;width:24px;height:24px;background:#38B1DC;border-radius:3px"></div>
<svg class="r" style="left:586px;top:477px;" width="24" height="24" viewBox="0 0 24 24" fill="none"><path d="M7.6 5.6 L3.6 9.5 L7.6 13.3 M14.6 4.6 L9.4 19 M16.5 10.7 L20.4 14.5 L16.5 18.2" stroke="#fff" stroke-width="1.7" stroke-linecap="round" stroke-linejoin="round"/></svg>
<div class="t b" style="left:528px;top:539.20px;font-size:11.1px;font-weight:700;color:#292A2E;">crowdin_sampl... oid.xml</div>
<div class="t" style="left:528px;top:552.65px;font-size:11.4px;font-weight:400;color:#292A2E;">02 Feb 2026, 12:17 PM</div>
<div class="t b" style="left:354.7px;top:605.76px;font-size:16px;font-weight:700;color:#292A2E;">Subtasks</div>
<div class="t" style="left:354.7px;top:637.49px;font-size:14.9px;font-weight:400;color:#6B6E76;">Add subtask</div>
<div class="t b" style="left:354.7px;top:687.76px;font-size:16px;font-weight:700;color:#292A2E;">Linked work items</div>
<div class="t" style="left:354.7px;top:717.54px;font-size:14.95px;font-weight:400;color:#6B6E76;">Add linked work item</div>
<svg class="r" style="left:332px;top:777px;" width="12" height="8" viewBox="0 0 12 8" fill="none"><path d="M1 1.5 L6 6.5 L11 1.5" stroke="#505258" stroke-width="1.4"/></svg>
<div class="t b" style="left:354.5px;top:773.55px;font-size:16.6px;font-weight:700;color:#292A2E;">Activity</div>
<div class="r" style="left:354px;top:795px;width:745px;height:2px;background:#DDDEE1"></div>
<div class="r" style="left:356px;top:817px;width:24px;height:24px;border-radius:50%;overflow:hidden"><svg width="24" height="24" viewBox="0 0 24 24" style="position:absolute;left:0;top:0"><rect width="24" height="24" fill="#9fb0c4"/><rect x="0" y="0" width="11" height="24" fill="#6f8fb2"/><rect x="0" y="12" width="10" height="12" fill="#3f6a8f"/><rect x="17" y="0" width="7" height="24" fill="#b9bfcb"/><path d="M15.5 14 L17 5 Q19 3 21.5 5.5 L22 13 Z" fill="#b89a86"/><ellipse cx="11.8" cy="9.6" rx="3.6" ry="4.6" fill="#c9a690"/><path d="M8.2 8.5 Q8 3.6 12 3.8 Q15.6 3.8 15.2 7.6 Q13 6 8.2 8.5 Z" fill="#2b2826"/><path d="M4 24 Q5 15 10 14.2 L13.5 14.2 Q20 14.5 21 24 Z" fill="#e6e1e8"/></svg></div>
<div class="r" style="left:395px;top:813.5px;width:691.5px;height:80px;border:1px solid #DDDEE1;box-shadow:0 0 0 1px #E6E7EA;border-radius:6px;box-sizing:border-box"></div>
<div class="t" style="left:416.6px;top:829.47px;font-size:14.8px;font-weight:400;color:#505258;">Add a comment...</div>
<div class="r" style="left:414px;top:863px;width:141px;height:30px;border:1px solid #DDDEE1;border-radius:4px;box-sizing:border-box"></div>
<div class="t" style="left:426px;top:867.47px;font-size:14.8px;font-weight:400;color:#292A2E;">Suggest a reply...</div>
<div class="r" style="left:559px;top:863px;width:194px;height:30px;border:1px solid #DDDEE1;border-radius:4px;box-sizing:border-box"></div>
<div class="t" style="left:571px;top:867.47px;font-size:14.8px;font-weight:400;color:#292A2E;">Who is working on this...?</div>
<div class="r" style="left:757px;top:863px;width:130px;height:30px;border:1px solid #DDDEE1;border-radius:4px;box-sizing:border-box"></div>
<div class="t" style="left:769px;top:867.47px;font-size:14.8px;font-weight:400;color:#292A2E;">Status update...</div>
<div class="r" style="left:1099px;top:128px;width:15px;height:750px;background:#FAFAFA;border-left:1px solid #EDEDED;border-right:1px solid #EDEDED;box-sizing:border-box"></div>
<div class="r" style="left:1103px;top:129px;width:8px;height:454px;background:#C1C1C1;border-radius:4px"></div>
<div class="r" style="left:1142px;top:160px;width:81px;height:32px;background:#F0F1F2;border-radius:4px"></div>
<div class="t m" style="left:1154.7px;top:169.11px;font-size:14.4px;font-weight:400;color:#292A2E;">To Do</div>
<svg class="r" style="left:1199px;top:171px;" width="12" height="8" viewBox="0 0 12 8" fill="none"><path d="M1.5 1.5 L6 6 L10.5 1.5" stroke="#292A2E" stroke-width="1.4"/></svg>
<div class="r" style="left:1231px;top:160px;width:32px;height:32px;border:1px solid #E0E1E3;background:transparent;border-radius:3px;box-sizing:border-box"></div>
<svg class="r" style="left:1231px;top:160px;" width="32" height="32" viewBox="0 0 32 32" fill="none"><path d="M18.3 8.4 L10.3 16 H16.2 L13.5 23.6 L21.5 16 H15.6 Z" stroke="#505258" stroke-width="1.5" stroke-linejoin="round"/></svg>
<div class="r" style="left:1271px;top:160px;width:132px;height:32px;border:1px solid #DDDEE1;border-radius:4px;box-sizing:border-box"></div>
<svg class="r" style="left:1281px;top:170px;" width="12" height="12" viewBox="0 0 12 12" fill="none"><path d="M8.20 6.00 L11.50 6.00" stroke="#505258" stroke-width="1.2"/><path d="M7.56 7.56 L9.89 9.89" stroke="#505258" stroke-width="1.2"/><path d="M6.00 8.20 L6.00 11.50" stroke="#505258" stroke-width="1.2"/><path d="M4.44 7.56 L2.11 9.89" stroke="#505258" stroke-width="1.2"/><path d="M3.80 6.00 L0.50 6.00" stroke="#505258" stroke-width="1.2"/><path d="M4.44 4.44 L2.11 2.11" stroke="#505258" stroke-width="1.2"/><path d="M6.00 3.80 L6.00 0.50" stroke="#505258" stroke-width="1.2"/><path d="M7.56 4.44 L9.89 2.11" stroke="#505258" stroke-width="1.2"/></svg>
<div class="t m" style="left:1299px;top:168.35px;font-size:15.3px;font-weight:400;color:#292A2E;">Improve Task</div>
<div class="r" style="left:1142px;top:204px;width:417px;height:522px;border:1px solid #DDDEE1;border-radius:6px;box-sizing:border-box"></div>
<svg class="r" style="left:1157px;top:225px;" width="12" height="8" viewBox="0 0 12 8" fill="none"><path d="M1.5 1.5 L6 6 L10.5 1.5" stroke="#505258" stroke-width="1.4"/></svg>
<div class="t m" style="left:1179.5px;top:221.33px;font-size:16.5px;font-weight:400;color:#292A2E;">Details</div>
<svg class="r" style="left:1522px;top:220px;" width="16" height="16" viewBox="0 0 16 16" fill="none"><path d="M6.6 1 H9.4 L9.9 3 L11.6 4 L13.6 3.4 L15 5.8 L13.5 7.2 V8.8 L15 10.2 L13.6 12.6 L11.6 12 L9.9 13 L9.4 15 H6.6 L6.1 13 L4.4 12 L2.4 12.6 L1 10.2 L2.5 8.8 V7.2 L1 5.8 L2.4 3.4 L4.4 4 L6.1 3 Z" stroke="#292A2E" stroke-width="1.4" stroke-linejoin="round"/><circle cx="8" cy="8" r="2.2" stroke="#292A2E" stroke-width="1.4"/></svg>
<div class="t m" style="left:1162.5px;top:281.87px;font-size:14.8px;font-weight:400;color:#505258;">Assignee</div>
<div class="r" style="left:1316px;top:265px;width:24px;height:24px;background:#DDDEE1;border-radius:50%"></div>
<svg class="r" style="left:1316px;top:265px;" width="24" height="24" viewBox="0 0 24 24" fill="none"><circle cx="12" cy="8.8" r="3.1" stroke="#505258" stroke-width="1.6"/><path d="M6.8 18.2 V17 a5.2 3.6 0 0 1 10.4 0 V18.2" stroke="#505258" stroke-width="1.6"/></svg>
<div class="t" style="left:1348.4px;top:270.24px;font-size:14.6px;font-weight:400;color:#292A2E;">Unassigned</div>
<div class="t" style="left:1316.2px;top:299.96px;font-size:14.7px;font-weight:400;color:#1868DB;">Assign to me</div>
<div class="t m" style="left:1162.5px;top:337.47px;font-size:14.8px;font-weight:400;color:#505258;">Priority</div>
<svg class="r" style="left:1318px;top:341px;" width="13" height="8" viewBox="0 0 13 8" fill="none"><path d="M0.5 1.5 H12.5 M0.5 6.5 H12.5" stroke="#E06C00" stroke-width="1.6"/></svg>
<div class="t" style="left:1340.1px;top:337.51px;font-size:14.75px;font-weight:400;color:#292A2E;">Medium</div>
<div class="t m" style="left:1162.5px;top:382.07px;font-size:14.8px;font-weight:400;color:#505258;">Parent</div>
<div class="t" style="left:1316px;top:382.24px;font-size:14.6px;font-weight:400;color:#6B6E76;">None</div>
<div class="t m" style="left:1162.5px;top:426.07px;font-size:14.8px;font-weight:400;color:#505258;">Due date</div>
<div class="t" style="left:1316px;top:426.24px;font-size:14.6px;font-weight:400;color:#6B6E76;">None</div>
<div class="t m" style="left:1162.5px;top:470.07px;font-size:14.8px;font-weight:400;color:#505258;">Labels</div>
<div class="t" style="left:1316px;top:470.24px;font-size:14.6px;font-weight:400;color:#6B6E76;">None</div>
<div class="t m" style="left:1162.5px;top:516.07px;font-size:14.8px;font-weight:400;color:#505258;">Team</div>
<div class="t" style="left:1316px;top:516.24px;font-size:14.6px;font-weight:400;color:#505258;">None</div>
<div class="t m" style="left:1162.5px;top:562.07px;font-size:14.8px;font-weight:400;color:#505258;">Start date</div>
<div class="t" style="left:1316px;top:562.24px;font-size:14.6px;font-weight:400;color:#6B6E76;">None</div>
<div class="t m" style="left:1162.5px;top:621.87px;font-size:14.8px;font-weight:400;color:#505258;">Development</div>
<svg class="r" style="left:1313px;top:606px;" width="14" height="14" viewBox="0 0 14 14" fill="none"><circle cx="3.2" cy="2" r="1.6" stroke="#1868DB" stroke-width="1.4"/><circle cx="10.9" cy="2" r="1.6" stroke="#1868DB" stroke-width="1.4"/><circle cx="3.2" cy="11.6" r="1.6" stroke="#1868DB" stroke-width="1.4"/><path d="M3.2 3.6 V7.6 M4.8 11.6 H8.4 a2.5 2.5 0 0 0 2.5 -2.5 V3.6" stroke="#1868DB" stroke-width="1.4"/></svg>
<div class="t b" style="left:1334px;top:606.42px;font-size:14.04px;font-weight:700;color:#1868DB;">Create branch</div>
<svg class="r" style="left:1521px;top:609px;" width="12" height="8" viewBox="0 0 12 8" fill="none"><path d="M1.5 1.5 L6 6 L10.5 1.5" stroke="#1868DB" stroke-width="1.4"/></svg>
<svg class="r" style="left:1316px;top:637px;" width="8" height="16" viewBox="0 0 8 16" fill="none"><path d="M4 0.5 V5.5 M4 10.5 V15.5" stroke="#1868DB" stroke-width="1.5"/><circle cx="4" cy="8" r="2.3" stroke="#1868DB" stroke-width="1.4"/></svg>
<div class="t b" style="left:1334px;top:638.72px;font-size:14.04px;font-weight:700;color:#1868DB;">Create commit</div>
<svg class="r" style="left:1521px;top:641px;" width="12" height="8" viewBox="0 0 12 8" fill="none"><path d="M1.5 1.5 L6 6 L10.5 1.5" stroke="#1868DB" stroke-width="1.4"/></svg>
<div class="t m" style="left:1162.5px;top:681.97px;font-size:14.8px;font-weight:400;color:#505258;">Reporter</div>
<div class="r" style="left:1316px;top:677px;width:24px;height:24px;border-radius:50%;overflow:hidden"><svg width="24" height="24" viewBox="0 0 24 24" style="position:absolute;left:0;top:0"><rect width="24" height="24" fill="#9fb0c4"/><rect x="0" y="0" width="11" height="24" fill="#6f8fb2"/><rect x="0" y="12" width="10" height="12" fill="#3f6a8f"/><rect x="17" y="0" width="7" height="24" fill="#b9bfcb"/><path d="M15.5 14 L17 5 Q19 3 21.5 5.5 L22 13 Z" fill="#b89a86"/><ellipse cx="11.8" cy="9.6" rx="3.6" ry="4.6" fill="#c9a690"/><path d="M8.2 8.5 Q8 3.6 12 3.8 Q15.6 3.8 15.2 7.6 Q13 6 8.2 8.5 Z" fill="#2b2826"/><path d="M4 24 Q5 15 10 14.2 L13.5 14.2 Q20 14.5 21 24 Z" fill="#e6e1e8"/></svg></div>
<div class="t" style="left:1347.7px;top:682.01px;font-size:14.75px;font-weight:400;color:#292A2E;">Nazarii Makar</div>
<div class="r" style="left:1142px;top:734px;width:417px;height:50px;border:1px solid #DDDEE1;border-radius:6px;box-sizing:border-box"></div>
<svg class="r" style="left:1159px;top:754px;" width="8" height="12" viewBox="0 0 8 12" fill="none"><path d="M2 1 L6.5 6 L2 11" stroke="#505258" stroke-width="1.4"/></svg>
<div class="t m" style="left:1179.9px;top:751.29px;font-size:16.9px;font-weight:400;color:#292A2E;">Automation</div>
<svg class="r" style="left:1272px;top:746px;" width="32" height="32" viewBox="0 0 32 32" fill="none"><path d="M18.3 8.4 L10.3 16 H16.2 L13.5 23.6 L21.5 16 H15.6 Z" stroke="#505258" stroke-width="1.5" stroke-linejoin="round"/></svg>
<div class="t" style="left:1314.5px;top:755.02px;font-size:12.5px;font-weight:400;color:#6B6E76;">Rule executions</div>
<div class="t" style="left:1156.4px;top:796.93px;font-size:12.6px;font-weight:400;color:#505258;">Created 3 minutes ago</div>
<div class="t" style="left:1156.4px;top:818.98px;font-size:12.55px;font-weight:400;color:#505258;">Updated 21 seconds ago</div>
<svg class="r" style="left:1459px;top:797px;" width="16" height="16" viewBox="0 0 16 16" fill="none"><path d="M6.6 1 H9.4 L9.9 3 L11.6 4 L13.6 3.4 L15 5.8 L13.5 7.2 V8.8 L15 10.2 L13.6 12.6 L11.6 12 L9.9 13 L9.4 15 H6.6 L6.1 13 L4.4 12 L2.4 12.6 L1 10.2 L2.5 8.8 V7.2 L1 5.8 L2.4 3.4 L4.4 4 L6.1 3 Z" stroke="#505258" stroke-width="1.4" stroke-linejoin="round"/><circle cx="8" cy="8" r="2.2" stroke="#505258" stroke-width="1.4"/></svg>
<div class="t m" style="left:1480.9px;top:796.70px;font-size:15px;font-weight:400;color:#505258;">Configure</div>
<div class="r" style="left:1583px;top:128px;width:15px;height:750px;background:#FAFAFA;border-left:1px solid #EDEDED;box-sizing:border-box"></div>
<div class="r" style="left:1587px;top:129px;width:8px;height:736px;background:#C1C1C1;border-radius:4px"></div>
</div></body></html>
